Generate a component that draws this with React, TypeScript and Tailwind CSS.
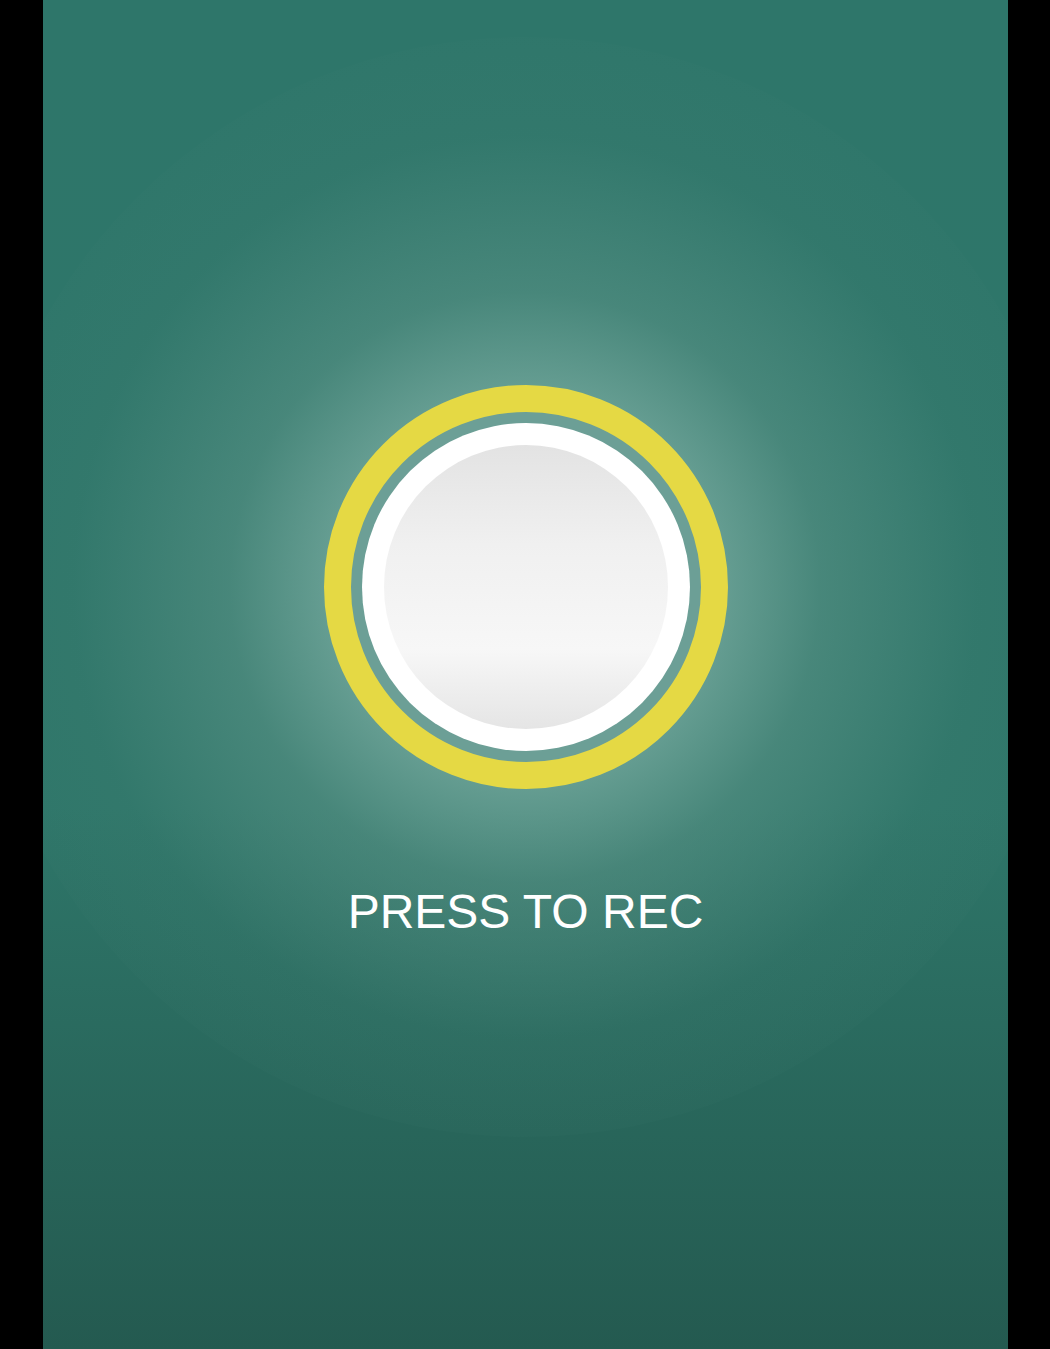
import React from 'react';

const App: React.FC = () => {
  return (
    <div className="w-full min-h-[1349px] bg-black flex justify-center">
      <main className="w-[965px] min-h-[1349px] ml-[1px] bg-[linear-gradient(180deg,#2e766a_0%,#2e7669_60%,#245a50_100%)] relative overflow-hidden">
        {/* glow behind the button */}
        <div className="absolute left-[482px] top-[587px] w-[1100px] h-[1100px] -translate-x-1/2 -translate-y-1/2 rounded-full bg-[radial-gradient(circle,rgba(200,225,218,0.8)_0%,rgba(160,200,190,0.6)_20%,rgba(110,160,148,0.4)_38%,rgba(70,130,118,0.18)_58%,rgba(46,118,105,0)_78%)]" />

        <div className="relative flex flex-col items-center pt-[385px]">
          {/* record button */}
          <button className="w-[404px] h-[404px] rounded-full border-[27px] border-[#e5d944] bg-[#6c9f96] flex items-center justify-center">
            <span className="w-[328px] h-[328px] rounded-full bg-white flex items-center justify-center">
              <span className="w-[284px] h-[284px] rounded-full bg-[linear-gradient(180deg,#e3e3e3_0%,#f0f0f0_35%,#f7f7f7_72%,#e5e5e5_100%)]" />
            </span>
          </button>

          <p className="mt-[99px] text-white text-[48px] leading-none font-['Liberation_Sans',Arial,sans-serif]">
            PRESS TO REC
          </p>
        </div>
      </main>
    </div>
  );
};

export default App;
